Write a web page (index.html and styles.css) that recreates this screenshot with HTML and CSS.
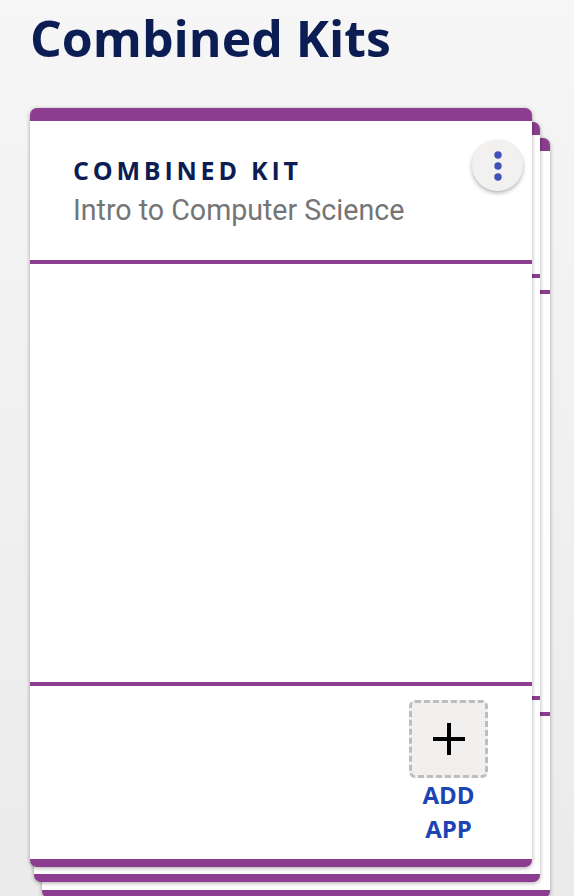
FILE: index.html
```html
<!DOCTYPE html>
<html>
<head>
<meta charset="utf-8">
<link rel="stylesheet" href="styles.css">
</head>
<body>
<main class="page">
  <h1 class="page-title">Combined Kits</h1>
  <div class="stack">
    <div class="card card-back card-back-2">
      <div class="card-head"></div>
      <div class="card-body"></div>
      <div class="card-foot"></div>
    </div>
    <div class="card card-back card-back-1">
      <div class="card-head"></div>
      <div class="card-body"></div>
      <div class="card-foot"></div>
    </div>
    <div class="card card-front">
      <div class="card-head">
        <div class="kit-label">COMBINED KIT</div>
        <div class="kit-name">Intro to Computer Science</div>
        <button class="menu-btn" aria-label="More">
          <svg width="10" height="30" viewBox="0 0 10 30"><circle cx="5" cy="4" r="3.7" fill="#3f51b5"/><circle cx="5" cy="15" r="3.7" fill="#3f51b5"/><circle cx="5" cy="26" r="3.7" fill="#3f51b5"/></svg>
        </button>
      </div>
      <div class="card-body"></div>
      <div class="card-foot">
        <div class="add-app">
          <div class="add-box">
            <svg width="34" height="34" viewBox="0 0 34 34"><path d="M17 1v32M1 17h32" stroke="#000" stroke-width="4"/></svg>
          </div>
          <div class="add-label">ADD<br>APP</div>
        </div>
      </div>
    </div>
  </div>
</main>
</body>
</html>
```
FILE: styles.css
```css
html, body {
  margin: 0;
  padding: 0;
  height: 100%;
}
body {
  background: linear-gradient(#f6f6f6, #ebebeb);
  overflow: hidden;
  font-family: "Open Sans", sans-serif;
}
.page {
  padding: 0 0 0 30px;
}
.page-title {
  margin: 0;
  padding-top: 5px;
  height: 103px;
  font-family: "Open Sans", sans-serif;
  font-weight: 700;
  font-size: 50px;
  line-height: 67px;
  color: #0b1d53;
}
.stack {
  position: relative;
  width: 520px;
}
.card {
  background: #fff;
  border-top: 13px solid #8c3d90;
  border-bottom: 8px solid #8c3d90;
  border-radius: 7px;
  box-shadow: 0 1px 4px rgba(0,0,0,0.35);
  display: flex;
  flex-direction: column;
  box-sizing: border-box;
}
.card-front {
  position: relative;
  z-index: 3;
  width: 502px;
  height: 759px;
}
.card-back {
  position: absolute;
}
.card-back-1 {
  z-index: 2;
  left: 4px;
  top: 14px;
  width: 506px;
  height: 760px;
}
.card-back-2 {
  z-index: 1;
  left: 12px;
  top: 30px;
  width: 508px;
  height: 760px;
}
.card-head {
  position: relative;
  height: 143px;
  border-bottom: 4px solid #8c3d90;
  padding: 34px 0 0 43px;
  box-sizing: border-box;
  flex: none;
}
.card-back .card-head {
  padding: 0;
}
.card-body {
  height: 418px;
  border-bottom: 4px solid #8c3d90;
  flex: none;
}
.card-foot {
  flex: 1;
  display: flex;
  justify-content: flex-end;
  padding: 14px 44px 0 0;
}
.kit-label {
  font-family: "Open Sans", sans-serif;
  font-weight: 700;
  font-size: 25px;
  line-height: 30px;
  letter-spacing: 3.8px;
  color: #0b1d53;
}
.kit-name {
  margin-top: 9px;
  font-family: Roboto, sans-serif;
  font-size: 28.6px;
  line-height: 33px;
  color: #757575;
}
.menu-btn {
  position: absolute;
  right: 9px;
  top: 19px;
  width: 51px;
  height: 51px;
  border-radius: 50%;
  border: none;
  background: #f2f1f0;
  box-shadow: 0 2px 4px rgba(0,0,0,0.3);
  display: flex;
  align-items: center;
  justify-content: center;
  padding: 0;
}
.add-app {
  display: flex;
  flex-direction: column;
  align-items: center;
  width: 79px;
}
.add-box {
  width: 79px;
  height: 78px;
  box-sizing: border-box;
  border: 3px dashed #bdbdbd;
  border-radius: 6px;
  background: #f1f0ef;
  display: flex;
  align-items: center;
  justify-content: center;
}
.add-label {
  font-family: "Open Sans", sans-serif;
  font-weight: 700;
  font-size: 24px;
  line-height: 34px;
  color: #1c45b3;
  text-align: center;
}
```
